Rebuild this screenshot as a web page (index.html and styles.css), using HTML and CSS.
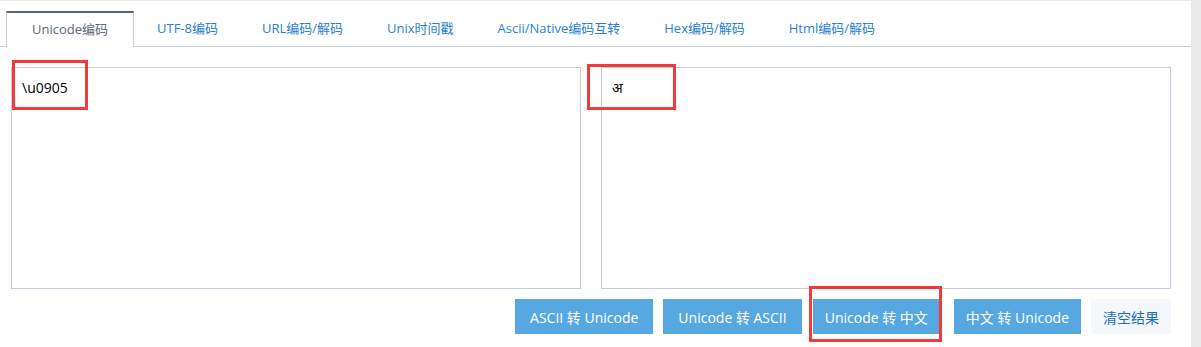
FILE: index.html
```html
<!DOCTYPE html>
<html lang="zh-CN">
<head>
<meta charset="utf-8">
<title>Unicode编码</title>
<link rel="stylesheet" href="styles.css">
</head>
<body>
<div class="page">
  <ul class="tabs">
    <li class="tab active">Unicode编码</li>
    <li class="tab">UTF-8编码</li>
    <li class="tab">URL编码/解码</li>
    <li class="tab">Unix时间戳</li>
    <li class="tab">Ascii/Native编码互转</li>
    <li class="tab">Hex编码/解码</li>
    <li class="tab">Html编码/解码</li>
  </ul>
  <div class="main">
    <div class="editors">
      <textarea class="box" readonly>\u0905</textarea>
      <textarea class="box" readonly>अ</textarea>
    </div>
    <div class="actions">
      <button class="btn btn-ascii">ASCII 转 Unicode</button>
      <button class="btn btn-ascii">Unicode 转 ASCII</button>
      <button class="btn btn-mid">Unicode 转 中文</button>
      <button class="btn btn-wide">中文 转 Unicode</button>
      <button class="btn btn-light">清空结果</button>
    </div>
  </div>
  <div class="mark mark-left"></div>
  <div class="mark mark-right"></div>
  <div class="mark mark-btn"></div>
</div>
</body>
</html>
```
FILE: styles.css
```css
html, body {
  margin: 0;
  padding: 0;
  background: #e8e8e8;
}
body {
  font-family: "Open Sans", "Noto Sans CJK SC", sans-serif;
}
.page {
  position: relative;
  width: 1191px;
  height: 346px;
  margin-top: 1px;
  background: #ffffff;
}
.tabs {
  list-style: none;
  margin: 0;
  padding: 10px 0 0 6px;
  display: flex;
  border-bottom: 1px solid #c8cfdd;
}
.tab {
  height: 35px;
  box-sizing: border-box;
  padding: 0 22px;
  font-size: 13px;
  line-height: 35px;
  color: #2a7fd0;
  white-space: nowrap;
}
.tab.active {
  width: 128px;
  padding: 0;
  text-align: center;
  color: #5f6779;
  line-height: 33px;
  background: #ffffff;
  border-top: 2px solid #5a6478;
  border-left: 1px solid #c8cfdd;
  border-right: 1px solid #c8cfdd;
  margin-bottom: -1px;
  height: 36px;
  margin-right: 1px;
}
.main {
  padding: 20px 20px 0 11px;
}
.editors {
  display: flex;
  gap: 20px;
}
.box {
  display: block;
  width: 570px;
  height: 222px;
  box-sizing: border-box;
  margin: 0;
  padding: 10px 10px;
  border: 1px solid #c5ccdb;
  resize: none;
  outline: none;
  font-family: "Open Sans", "Noto Sans Devanagari", "Noto Sans CJK SC", sans-serif;
  font-size: 14px;
  line-height: 20px;
  color: #000000;
  background: #ffffff;
}
.actions {
  display: flex;
  justify-content: flex-end;
  gap: 10px;
  margin-top: 10px;
}
.btn {
  height: 35px;
  padding: 0 12px;
  border: none;
  background: #57a7e1;
  color: #ffffff;
  font-family: "Open Sans", "Noto Sans CJK SC", sans-serif;
  font-size: 14px;
  white-space: nowrap;
}
.btn-ascii {
  padding: 0 15px;
}
.btn-mid {
  margin-left: 1px;
}
.btn-wide {
  margin-left: 4px;
}
.btn-light {
  background: #f4f8fc;
  color: #1a6fc0;
}
.mark {
  position: absolute;
  box-sizing: border-box;
  border: 3px solid #f23a3a;
  pointer-events: none;
}
.mark-left {
  left: 12px;
  top: 59px;
  width: 76px;
  height: 50px;
}
.mark-right {
  left: 587px;
  top: 63px;
  width: 89px;
  height: 46px;
}
.mark-btn {
  left: 809px;
  top: 285px;
  width: 133px;
  height: 56px;
}
```
